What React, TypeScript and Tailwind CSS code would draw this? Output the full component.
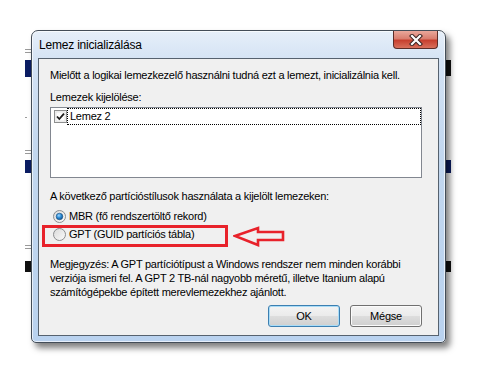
import React from "react";

const FONT = "font-['Liberation_Sans',Arial,sans-serif]";

function Radio({ checked }: { checked?: boolean }) {
  return (
    <svg width="13" height="13" viewBox="0 0 13 13">
      <defs>
        <linearGradient id={checked ? "rg1" : "rg0"} x1="0" y1="0" x2="1" y2="1">
          <stop offset="0" stopColor="#d9d9d9" />
          <stop offset="1" stopColor="#fbfbfb" />
        </linearGradient>
        <radialGradient id="dot" cx="0.4" cy="0.35" r="0.7">
          <stop offset="0" stopColor="#9fd7ff" />
          <stop offset="0.5" stopColor="#2a8ad4" />
          <stop offset="1" stopColor="#0d4f8c" />
        </radialGradient>
      </defs>
      <circle cx="6.5" cy="6.5" r="6" fill={`url(#${checked ? "rg1" : "rg0"})`} stroke="#8b8d8f" />
      {checked && <circle cx="6.5" cy="6.5" r="3.3" fill="url(#dot)" stroke="#1b4f80" strokeWidth="0.6" />}
    </svg>
  );
}

function Check() {
  return (
    <svg width="13" height="13" viewBox="0 0 13 13">
      <rect x="0.5" y="0.5" width="12" height="12" fill="#f4f4f4" stroke="#8e8f8f" />
      <rect x="2" y="2" width="9" height="9" fill="#fdfdfd" stroke="#d0d0d0" strokeWidth="0.5" />
      <path d="M3 6.5 L5.3 9 L10 3.6" fill="none" stroke="#1a1a1a" strokeWidth="1.8" />
    </svg>
  );
}

function WinButton({ children, primary }: { children: React.ReactNode; primary?: boolean }) {
  return (
    <button
      className={`w-[72px] h-[22px] rounded-[3px] border text-[11px] text-black leading-none bg-[linear-gradient(180deg,#f3f3f3_0%,#ebebeb_48%,#dddddd_52%,#cfcfcf_100%)] ${
        primary
          ? "border-[#3c7fb1] shadow-[inset_0_0_0_1px_#a9dcf7]"
          : "border-[#707070] shadow-[inset_0_0_0_1px_#fbfbfb]"
      }`}
    >
      {children}
    </button>
  );
}

// edges of the windows lying behind the dialog
function Desktop() {
  return (
    <svg className="absolute inset-0" width="477" height="376">
      <rect x="25" y="60" width="7" height="17" fill="#0b1d63" />
      <rect x="25" y="160" width="7" height="13" fill="#0b1d63" />
      <rect x="25" y="261" width="7" height="11" fill="#111" />
      <rect x="445" y="60" width="6" height="16" fill="#111" />
      <rect x="445" y="160" width="6" height="13" fill="#0b1d63" />
      <rect x="445" y="261" width="6" height="11" fill="#111" />
      <path d="M25 49.5h6M25 52.5h6M25 150.5h6M25 153.5h6M25 245.5h6M25 248.5h6M25 117.5h2" stroke="#9a9a9a" />
    </svg>
  );
}

export default function App() {
  return (
    <div className={`relative w-[477px] h-[376px] bg-white overflow-hidden pt-[30px] pl-[31px] ${FONT}`}>
      <Desktop />

      {/* dialog */}
      <div className="relative flex flex-col w-[415px] h-[313px] rounded-t-[7px] rounded-b-[5px] border border-[#434d58] bg-[linear-gradient(180deg,#e6eff9_0%,#d3e2f4_10%,#c2d7ef_40%,#b9d2ef_100%)] shadow-[inset_0_0_0_1px_rgba(255,255,255,0.65),4px_5px_6px_rgba(0,0,0,0.5)]">
        <div className="h-[27px] flex items-center justify-between pl-[7px] pr-[7px]">
          <span className="self-center text-[12px] tracking-[-0.2px] text-black">Lemez inicializálása</span>
          <div className="self-start w-[45px] h-[18px] rounded-b-[4px] border border-t-0 border-[#5c2d28] bg-[linear-gradient(180deg,#eaa89b_0%,#d97e6f_45%,#c7402f_55%,#d9705c_100%)] flex items-center justify-center">
            <svg width="14" height="12" viewBox="0 0 14 12">
              <path d="M3 2 L11 10 M11 2 L3 10" stroke="#3b2422" strokeWidth="4.2" strokeLinecap="square" />
              <path d="M3 2 L11 10 M11 2 L3 10" stroke="#ffffff" strokeWidth="2.2" strokeLinecap="square" />
            </svg>
          </div>
        </div>

        {/* client area */}
        <div className="flex-1 mx-[6px] mb-[6px] border border-[#56626f] bg-[#f0f0f0] pl-[11px] pt-[9px] text-[11px] tracking-[-0.25px] text-black">
          <p className="leading-[15px]">Mielőtt a logikai lemezkezelő használni tudná ezt a lemezt, inicializálnia kell.</p>
          <p className="leading-[15px] mt-[7px]">Lemezek kijelölése:</p>
          <div className="mt-[2px] w-[372px] h-[71px] border border-[#828790] bg-white">
            <div className="flex items-center h-[17px]">
              <div className="ml-[3px] flex">
                <Check />
              </div>
              <div className="flex-1 h-full border border-dotted border-black pl-[2px] leading-[15px]">Lemez 2</div>
            </div>
          </div>
          <p className="leading-[15px] mt-[11px]">A következő partícióstílusok használata a kijelölt lemezeken:</p>
          <div className="mt-[3px]">
            <div className="flex items-center h-[18px] pl-[3px] gap-[3px]">
              <Radio checked />
              <span>MBR (fő rendszertöltő rekord)</span>
            </div>
            <div className="relative flex items-center h-[18px] pl-[3px] gap-[3px]">
              <Radio />
              <span>GPT (GUID partíciós tábla)</span>
              {/* annotation drawn over the dialog */}
              <div className="absolute left-[-8px] top-0 w-[186px] h-[22px] border-[3px] border-[#e8222b]" />
              <svg className="absolute left-[183px] top-[1px]" width="54" height="22" viewBox="0 0 54 22">
                <path
                  d="M2 10 L25 2 L25 6 L50 6 L50 14 L25 14 L25 19 Z"
                  fill="none"
                  stroke="#e8222b"
                  strokeWidth="2.6"
                  strokeLinejoin="miter"
                />
              </svg>
            </div>
          </div>
          <p className="leading-[14px] mt-[14px]">
            Megjegyzés: A GPT partíciótípust a Windows rendszer nem minden korábbi
            <br />
            verziója ismeri fel. A GPT 2 TB-nál nagyobb méretű, illetve Itanium alapú
            <br />
            számítógépekbe épített merevlemezekhez ajánlott.
          </p>
          <div className="flex justify-end gap-[10px] w-[372px] mt-[6px]">
            <WinButton primary>OK</WinButton>
            <WinButton>Mégse</WinButton>
          </div>
        </div>
      </div>
    </div>
  );
}
